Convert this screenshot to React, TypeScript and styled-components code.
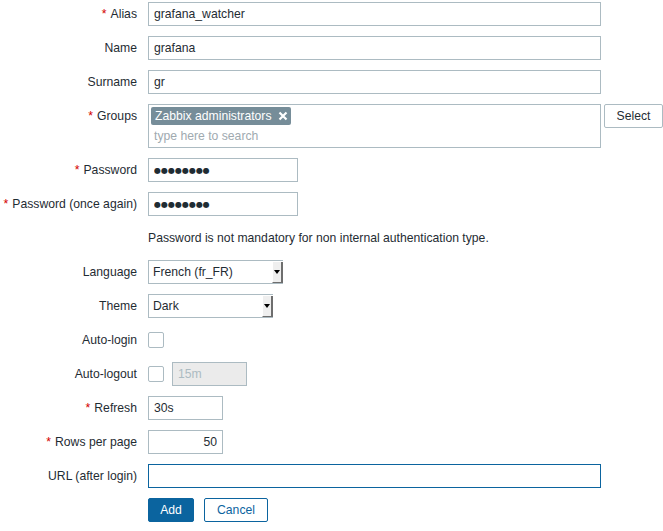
import React from 'react';
import styled, { createGlobalStyle } from 'styled-components';

const Global = createGlobalStyle`
  body {
    margin: 0;
    background: #ffffff;
    font-family: 'Liberation Sans', Arial, sans-serif;
    font-size: 12.2px;
    color: #1f2c33;
  }
`;

const Form = styled.form`
  display: grid;
  grid-template-columns: 148px 515px;
  row-gap: 10px;
  padding-top: 2px;
`;

const Label = styled.label`
  line-height: 24px;
  text-align: right;
  padding-right: 11px;
  white-space: nowrap;
`;

const Star = styled.span`
  color: #d40000;
  margin-right: 4px;
`;

const Field = styled.div<{ $top?: boolean }>`
  display: flex;
  align-items: ${(p) => (p.$top ? 'flex-start' : 'center')};
  gap: ${(p) => (p.$top ? 3 : 8)}px;
  min-height: 24px;
`;

const Input = styled.input<{ $width: number; $right?: boolean; $focus?: boolean }>`
  box-sizing: border-box;
  width: ${(p) => p.$width}px;
  height: 24px;
  margin: 0;
  padding: 0 5px;
  border: 1px solid ${(p) => (p.$focus ? '#0b649f' : '#acbbc2')};
  border-radius: 0;
  background: #ffffff;
  font-family: 'Liberation Sans', Arial, sans-serif;
  font-size: 12.2px;
  color: #1f2c33;
  text-align: ${(p) => (p.$right ? 'right' : 'left')};
  outline: none;
  &:disabled {
    background: #ebebeb;
    color: #acbbc2;
  }
`;

const Secret = styled(Input)`
  font-family: 'DejaVu Sans', sans-serif;
  font-size: 8px;
  letter-spacing: 0;
  color: #1f2c33;
`;

const MultiSelect = styled.div`
  box-sizing: border-box;
  width: 453px;
  height: 44px;
  border: 1px solid #acbbc2;
  padding: 2px 2px 0 2px;
  display: flex;
  flex-direction: column;
  align-items: flex-start;
`;

const Tag = styled.span`
  display: inline-flex;
  align-items: center;
  gap: 6px;
  height: 18px;
  padding: 0 3px 0 4px;
  border-radius: 2px;
  background: #768d99;
  color: #ffffff;
  line-height: 18px;
`;

const Search = styled.span`
  padding-left: 3px;
  line-height: 23px;
  color: #a0aab0;
`;

const Button = styled.button<{ $primary?: boolean; $width: number }>`
  box-sizing: border-box;
  width: ${(p) => p.$width}px;
  height: 24px;
  margin: 0;
  padding: 0;
  border-radius: 2px;
  border: 1px solid ${(p) => (p.$primary ? '#0b649f' : '#acbbc2')};
  background: ${(p) => (p.$primary ? '#0b649f' : '#ffffff')};
  color: ${(p) => (p.$primary ? '#ffffff' : '#1f2c33')};
  font-family: 'Liberation Sans', Arial, sans-serif;
  font-size: 12.2px;
  align-self: flex-start;
`;

const CancelButton = styled(Button)`
  border-color: #0b649f;
  color: #0b649f;
`;

const Select = styled.div<{ $width: number }>`
  box-sizing: border-box;
  width: ${(p) => p.$width}px;
  height: 24px;
  display: flex;
  border: 1px solid #acbbc2;
  border-right: none;
`;

const SelectText = styled.span`
  flex: 1;
  padding-left: 4px;
  line-height: 22px;
`;

const Arrow = styled.span`
  box-sizing: border-box;
  width: 11px;
  margin: 1px 0 0 0;
  height: 21px;
  display: flex;
  align-items: center;
  justify-content: center;
  background: #efefef;
  border-right: 2px solid #6e6e6e;
  border-bottom: 1px solid #6e6e6e;
  border-left: 1px solid #ffffff;
`;

const Triangle = styled.span`
  width: 0;
  height: 0;
  border-left: 3px solid transparent;
  border-right: 3px solid transparent;
  border-top: 4px solid #000000;
`;

const Checkbox = styled.span`
  box-sizing: border-box;
  display: inline-block;
  width: 16px;
  height: 16px;
  border: 1px solid #acbbc2;
  border-radius: 2px;
`;

const Hint = styled.div`
  line-height: 24px;
`;

const Actions = styled.div`
  display: flex;
  gap: 10px;
`;

const Close = () => (
  <svg width="10" height="10" viewBox="0 0 10 10">
    <path d="M1.5 1.5 L8.5 8.5 M8.5 1.5 L1.5 8.5" stroke="#ffffff" strokeWidth="2.2" />
  </svg>
);

const Row: React.FC<{ label: string; required?: boolean; top?: boolean; children: React.ReactNode }> = ({
  label,
  required,
  top,
  children,
}) => (
  <>
    <Label>
      {required && <Star>*</Star>}
      {label}
    </Label>
    <Field $top={top}>{children}</Field>
  </>
);

const dots = '\u25CF'.repeat(8);

export default function App() {
  return (
    <>
      <Global />
      <Form onSubmit={(e) => e.preventDefault()}>
        <Row label="Alias" required>
          <Input $width={453} defaultValue="grafana_watcher" />
        </Row>
        <Row label="Name">
          <Input $width={453} defaultValue="grafana" />
        </Row>
        <Row label="Surname">
          <Input $width={453} defaultValue="gr" />
        </Row>
        <Row label="Groups" required top>
          <MultiSelect>
            <Tag>
              Zabbix administrators <Close />
            </Tag>
            <Search>type here to search</Search>
          </MultiSelect>
          <Button type="button" $width={59}>
            Select
          </Button>
        </Row>
        <Row label="Password" required>
          <Secret $width={150} defaultValue={dots} />
        </Row>
        <Row label="Password (once again)" required>
          <Secret $width={150} defaultValue={dots} />
        </Row>
        <span />
        <Hint>Password is not mandatory for non internal authentication type.</Hint>
        <Row label="Language">
          <Select $width={135}>
            <SelectText>French (fr_FR)</SelectText>
            <Arrow>
              <Triangle />
            </Arrow>
          </Select>
        </Row>
        <Row label="Theme">
          <Select $width={125}>
            <SelectText>Dark</SelectText>
            <Arrow>
              <Triangle />
            </Arrow>
          </Select>
        </Row>
        <Row label="Auto-login">
          <Checkbox />
        </Row>
        <Row label="Auto-logout">
          <Checkbox />
          <Input $width={75} disabled defaultValue="15m" />
        </Row>
        <Row label="Refresh" required>
          <Input $width={75} defaultValue="30s" />
        </Row>
        <Row label="Rows per page" required>
          <Input $width={75} $right defaultValue="50" />
        </Row>
        <Row label="URL (after login)">
          <Input $width={453} $focus />
        </Row>
        <span />
        <Actions>
          <Button type="submit" $primary $width={46}>
            Add
          </Button>
          <CancelButton type="button" $width={64}>
            Cancel
          </CancelButton>
        </Actions>
      </Form>
    </>
  );
}
